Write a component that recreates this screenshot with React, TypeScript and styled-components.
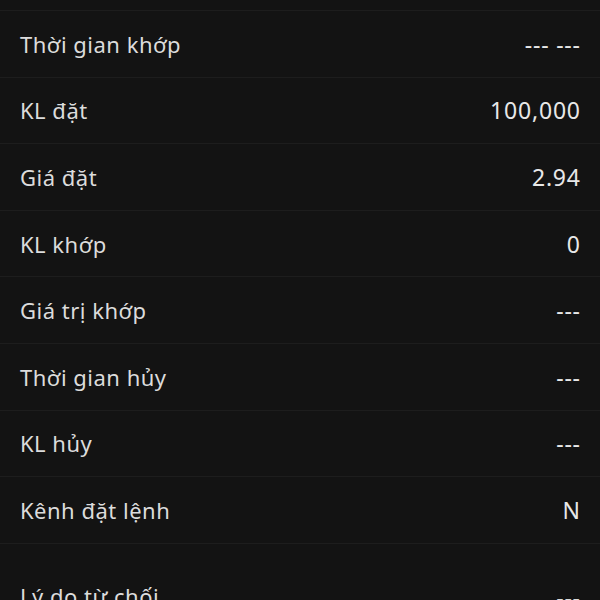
import React from "react";
import styled, { createGlobalStyle } from "styled-components";

const Global = createGlobalStyle`
  html, body { margin: 0; padding: 0; background: #131313; overflow: hidden; }
  body { font-family: "Noto Sans", "Open Sans", sans-serif; }
`;

const List = styled.div`
  padding-top: 10px;
  background: #131313;
`;

const Row = styled.div<{ $last?: boolean }>`
  display: flex;
  justify-content: space-between;
  box-sizing: border-box;
  height: ${(p) => (p.$last ? "104px" : "66.6px")};
  padding: ${(p) => (p.$last ? "37px 20px 0" : "0 20px")};
  align-items: ${(p) => (p.$last ? "flex-start" : "center")};
  border-top: 1.5px solid #1d1d1d;
`;

const Label = styled.span`
  font-size: 22px;
  color: #dcdcdc;
  letter-spacing: 0.5px;
`;

const Value = styled.span`
  font-size: 23px;
  color: #e8e8e8;
  letter-spacing: 0.8px;
  margin-right: -0.8px;
`;

const rows: [string, string][] = [
  ["Thời gian khớp", "--- ---"],
  ["KL đặt", "100,000"],
  ["Giá đặt", "2.94"],
  ["KL khớp", "0"],
  ["Giá trị khớp", "---"],
  ["Thời gian hủy", "---"],
  ["KL hủy", "---"],
  ["Kênh đặt lệnh", "N"],
  ["Lý do từ chối", "---"],
];

export default function App() {
  return (
    <>
      <Global />
      <List>
        {rows.map(([l, v], i) => (
          <Row key={l} $last={i === rows.length - 1}>
            <Label>{l}</Label>
            <Value>{v}</Value>
          </Row>
        ))}
      </List>
    </>
  );
}
